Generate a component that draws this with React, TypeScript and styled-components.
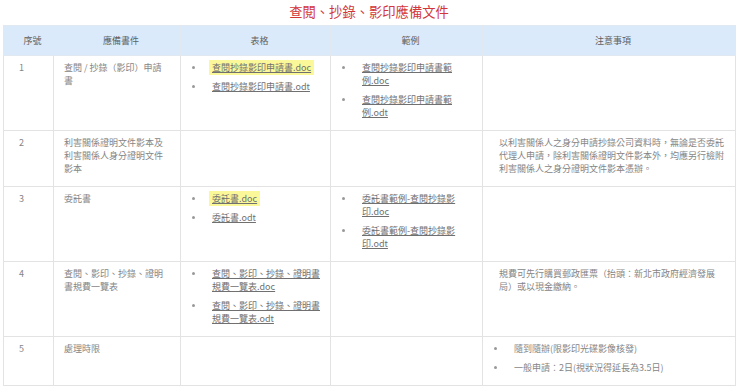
import { FC } from "react";
import styled, { createGlobalStyle } from "styled-components";

const GlobalStyle = createGlobalStyle`
  html, body {
    margin: 0;
    padding: 0;
    background: #ffffff;
  }
  body {
    font-family: "Noto Sans CJK TC", "Noto Sans", sans-serif;
  }
`;

const Page = styled.div`
  width: 740px;
  box-sizing: border-box;
  padding: 0 5px 0 3px;
`;

const Title = styled.h2`
  margin: 0;
  height: 25px;
  line-height: 23px;
  text-align: center;
  font-size: 13.3px;
  font-weight: 400;
  color: #d2363a;
`;

const Table = styled.table`
  width: 732px;
  border-collapse: collapse;
  table-layout: fixed;
  font-size: 9px;
  line-height: 13px;
  color: #858585;
`;

const Col = styled.col<{ $w: number }>`
  width: ${({ $w }) => $w}px;
`;

const Th = styled.th`
  height: 29px;
  padding: 0 0 0 8px;
  background: #dbeafa;
  border: 1px solid #e2e8ef;
  color: #606060;
  font-weight: 400;
  text-align: center;
  vertical-align: middle;
`;

const Td = styled.td<{ $pl?: number; $pr?: number }>`
  border: 1px solid #e3e3e3;
  vertical-align: top;
  padding: 5px ${({ $pr }) => $pr ?? 10}px 5px ${({ $pl }) => $pl ?? 10}px;
`;

const Text = styled.p<{ $indent?: number }>`
  margin: 0 0 6px;
  padding-left: ${({ $indent }) => $indent ?? 0}px;
`;

const List = styled.ul`
  list-style: none;
  margin: 0;
  padding: 0;
`;

const Item = styled.li`
  display: flex;
  margin-bottom: 6px;
`;

const Bullet = styled.span`
  flex: 0 0 21px;
  &::before {
    content: "";
    display: inline-block;
    vertical-align: top;
    width: 3px;
    height: 3px;
    margin: 5px 0 0 1px;
    border-radius: 50%;
    background: #999999;
  }
`;

const ItemText = styled.span`
  flex: 1;
  min-width: 0;
`;

const FileLink = styled.a<{ $highlight?: boolean }>`
  color: #707070;
  text-decoration: underline;
  cursor: pointer;
  padding: 1px 3px;
  margin: 0 -3px;
  background: ${({ $highlight }) => ($highlight ? "#fbf89a" : "transparent")};
`;

type FileItem = { name: string; highlight?: boolean };

type Row = {
  no: string;
  doc: string;
  forms?: FileItem[];
  samples?: FileItem[];
  note?: string;
  noteList?: string[];
};

const rows: Row[] = [
  {
    no: "1",
    doc: "查閱 / 抄錄（影印）申請書",
    forms: [
      { name: "查閱抄錄影印申請書.doc", highlight: true },
      { name: "查閱抄錄影印申請書.odt" },
    ],
    samples: [
      { name: "查閱抄錄影印申請書範例.doc" },
      { name: "查閱抄錄影印申請書範例.odt" },
    ],
  },
  {
    no: "2",
    doc: "利害關係證明文件影本及利害關係人身分證明文件影本",
    note: "以利害關係人之身分申請抄錄公司資料時，無論是否委託代理人申請，除利害關係證明文件影本外，均應另行檢附利害關係人之身分證明文件影本憑辦。",
  },
  {
    no: "3",
    doc: "委託書",
    forms: [{ name: "委託書.doc", highlight: true }, { name: "委託書.odt" }],
    samples: [
      { name: "委託書範例-查閱抄錄影印.doc" },
      { name: "委託書範例-查閱抄錄影印.odt" },
    ],
  },
  {
    no: "4",
    doc: "查閱、影印、抄錄、證明書規費一覽表",
    forms: [
      { name: "查閱、影印、抄錄、證明書規費一覽表.doc" },
      { name: "查閱、影印、抄錄、證明書規費一覽表.odt" },
    ],
    note: "規費可先行購買郵政匯票（抬頭：新北市政府經濟發展局）或以現金繳納。",
  },
  {
    no: "5",
    doc: "處理時限",
    noteList: ["隨到隨辦(限影印光碟影像核發)", "一般申請：2日(視狀況得延長為3.5日)"],
  },
];

const FileList: FC<{ files?: FileItem[] }> = ({ files }) => {
  if (!files) return null;
  return (
    <List>
      {files.map((f) => (
        <Item key={f.name}>
          <Bullet />
          <ItemText>
            <FileLink $highlight={f.highlight}>{f.name}</FileLink>
          </ItemText>
        </Item>
      ))}
    </List>
  );
};

export default function App() {
  return (
    <Page>
      <GlobalStyle />
      <Title>查閱、抄錄、影印應備文件</Title>
      <Table>
        <colgroup>
          <Col $w={50} />
          <Col $w={127} />
          <Col $w={150} />
          <Col $w={152} />
          <Col $w={253} />
        </colgroup>
        <thead>
          <tr>
            <Th>序號</Th>
            <Th>應備書件</Th>
            <Th>表格</Th>
            <Th>範例</Th>
            <Th>注意事項</Th>
          </tr>
        </thead>
        <tbody>
          {rows.map((r) => (
            <tr key={r.no}>
              <Td $pl={15}>
                <Text>{r.no}</Text>
              </Td>
              <Td $pr={13}>
                <Text>{r.doc}</Text>
              </Td>
              <Td $pr={6}>
                <FileList files={r.forms} />
              </Td>
              <Td $pr={24}>
                <FileList files={r.samples} />
              </Td>
              <Td $pr={8}>
                {r.note && <Text $indent={6}>{r.note}</Text>}
                {r.noteList && (
                  <List>
                    {r.noteList.map((n) => (
                      <Item key={n}>
                        <Bullet />
                        <ItemText>{n}</ItemText>
                      </Item>
                    ))}
                  </List>
                )}
              </Td>
            </tr>
          ))}
        </tbody>
      </Table>
    </Page>
  );
}
